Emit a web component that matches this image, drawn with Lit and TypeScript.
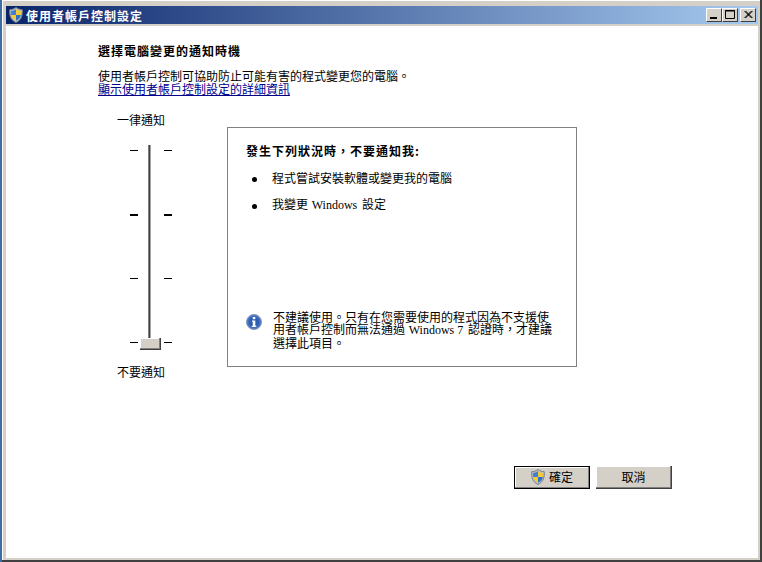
import { LitElement, html, css, svg } from "lit";
import { customElement } from "lit/decorators.js";

const shield = (cls: string) => html`<svg class=${cls} viewBox="0 0 14 16" aria-hidden="true">
  ${svg`<path d="M7 .5C5 2 3 2.6.7 2.7c-.2 5.500.6 10 6.300 12.800C12.700 12.700 13.500 8.200 13.300 2.700 11 2.600 9 2 7 .5Z" fill="#b9bdc6" stroke="#77808f" stroke-width="1"/>
  <path d="M7 2.300V8H2.200c-.1-1.300-.1-2.500-.1-4C3.900 3.800 5.500 3.300 7 2.300Z" fill="#3d7fd1"/>
  <path d="M7 2.300c1.500 1 3.100 1.500 4.900 1.700 0 1.500 0 2.700-.1 4H7V2.300Z" fill="#f7cb35"/>
  <path d="M2.200 8H7v5.800C4 12.200 2.600 10.400 2.200 8Z" fill="#f7cb35"/>
  <path d="M7 8h4.800c-.4 2.400-1.800 4.200-4.800 5.800V8Z" fill="#2f6fc4"/>`}
</svg>`;

@customElement("app-root")
export class AppRoot extends LitElement {
  static styles = css`
    :host {
      display: block;
      width: 762px;
      height: 562px;
      font-family: "Noto Sans CJK TC", "Liberation Sans", sans-serif;
      font-size: 12px;
      line-height: 13px;
      color: #000;
    }
    * { box-sizing: border-box; }
    .desk {
      height: 562px;
      padding-left: 2px;
      background: #3a6ea5;
      display: flex;
    }
    .frame {
      flex: 1;
      display: flex;
      flex-direction: column;
      background: #d4d0c8;
      padding: 6px 2px 2px 4px;
      border-right: 2px solid #404040;
      border-bottom: 2px solid #404040;
      box-shadow: inset 1px 1px 0 #fff;
    }
    .title {
      height: 18px;
      flex: none;
      display: flex;
      align-items: center;
      padding: 0 2px 0 3px;
      background: linear-gradient(90deg, #0a246a, #a6caf0);
      color: #fff;
      font-weight: 700;
      letter-spacing: 1px;
    }
    .ttl-shield { width: 14px; height: 16px; flex: none; margin-right: 3px; }
    .ctl { margin-left: auto; display: flex; align-items: center; }
    .ctl-btn {
      width: 16px;
      height: 14px;
      background: #d4d0c8;
      border-top: 1px solid #fff;
      border-left: 1px solid #fff;
      border-right: 1px solid #404040;
      border-bottom: 1px solid #404040;
      display: block;
    }
    .ctl-btn svg { display: block; width: 14px; height: 12px; }
    .ctl-btn.close { margin-left: 2px; }
    .body {
      flex: 1;
      margin-top: 2px;
      background: #fff;
      padding: 18px 86px 0 92px;
      display: flex;
      flex-direction: column;
    }
    h1 {
      margin: 0;
      font-size: 12px;
      line-height: 13px;
      font-weight: 700;
      letter-spacing: 1px;
    }
    .intro { margin: 12px 0 0; }
    .intro a { display: block; color: #00008b; text-decoration: underline; }
    .row { display: flex; margin-top: 18px; }
    .left { width: 129px; flex: none; }
    .lab { padding-left: 19px; }
    .slider {
      position: relative;
      display: flex;
      height: 205px;
      margin: 19px 0 15px 32px;
    }
    .ticks {
      width: 8px;
      display: flex;
      flex-direction: column;
      justify-content: space-between;
      padding: 5px 0 7px;
    }
    .tick { height: 1px; background: #000; }
    .tick.major { height: 2px; }
    .track {
      width: 3px;
      height: 195px;
      margin: 0 13px 0 10px;
      background: linear-gradient(90deg, #808080 0 1px, #404040 1px 2px, #a8a6a0 2px);
    }
    .thumb {
      position: absolute;
      left: 10px;
      top: 193px;
      width: 21px;
      height: 12px;
      background: #d4d0c8;
      border-right: 1px solid #404040;
      border-bottom: 1px solid #404040;
      box-shadow: inset -1px -1px 0 #808080, inset 1px 1px 0 #fff;
    }
    .box {
      width: 350px;
      height: 240px;
      margin-top: 14px;
      border: 1px solid #808080;
      padding: 16px 18px 17px 18px;
      display: flex;
      flex-direction: column;
    }
    .head { font-weight: 700; letter-spacing: 1px; }
    ul { list-style: none; margin: 14px 0 0; padding: 0; display: flex; flex-direction: column; gap: 13px; }
    li { display: flex; align-items: center; }
    .dot {
      width: 5px;
      height: 5px;
      margin: 4px 15px 0 6px;
      border-radius: 50%;
      background: #000;
      flex: none;
    }
    .latin { font-family: "Liberation Serif", serif; padding: 0 2px 0 1px; }
    .note { margin-top: auto; display: flex; gap: 11px; align-items: flex-start; line-height: 12.5px; }
    .info { width: 16px; height: 16px; flex: none; margin-top: 3px; }
    .foot { margin-top: 88px; display: flex; justify-content: flex-end; gap: 6px; }
    .btn {
      width: 76px;
      height: 23px;
      padding-bottom: 2px;
      display: flex;
      align-items: center;
      justify-content: center;
      background: #d4d0c8;
      border-right: 1px solid #404040;
      border-bottom: 1px solid #404040;
      box-shadow: inset -1px -1px 0 #808080, inset 1px 1px 0 #fff;
    }
    .btn.def {
      border: 1px solid #000;
      box-shadow: inset -1px -1px 0 #808080, inset 1px 1px 0 #fff;
      gap: 4px;
    }
    .btn-shield { width: 14px; height: 16px; }
  `;

  render() {
    return html`<div class="desk" lang="zh-TW">
      <div class="frame">
        <div class="title">
          ${shield("ttl-shield")}
          <span>使用者帳戶控制設定</span>
          <div class="ctl">
            <span class="ctl-btn"><svg viewBox="0 0 14 12">${svg`<rect x="3" y="8" width="7" height="2" fill="#000"/>`}</svg></span>
            <span class="ctl-btn"><svg viewBox="0 0 14 12">${svg`<path d="M2.500 1.500h9v8h-9z M2 2h10" fill="none" stroke="#000"/>`}</svg></span>
            <span class="ctl-btn close"><svg viewBox="0 0 14 12">${svg`<path d="M3.500 2 10.500 9M4.500 2 11.500 9M10.500 2 3.500 9M11.500 2 4.500 9" stroke="#000" stroke-width="1"/>`}</svg></span>
          </div>
        </div>
        <div class="body">
          <h1>選擇電腦變更的通知時機</h1>
          <p class="intro">使用者帳戶控制可協助防止可能有害的程式變更您的電腦。<a href="#">顯示使用者帳戶控制設定的詳細資訊</a></p>
          <div class="row">
            <div class="left">
              <div class="lab">一律通知</div>
              <div class="slider">
                <div class="ticks"><div class="tick"></div><div class="tick major"></div><div class="tick"></div><div class="tick"></div></div>
                <div class="track"></div>
                <div class="ticks"><div class="tick"></div><div class="tick major"></div><div class="tick"></div><div class="tick"></div></div>
                <div class="thumb"></div>
              </div>
              <div class="lab">不要通知</div>
            </div>
            <div class="box">
              <div class="head">發生下列狀況時，不要通知我:</div>
              <ul>
                <li><span class="dot"></span>程式嘗試安裝軟體或變更我的電腦</li>
                <li><span class="dot"></span><span>我變更 <span class="latin">Windows</span> 設定</span></li>
              </ul>
              <div class="note">
                <svg class="info" viewBox="0 0 16 16" aria-hidden="true">${svg`
                  <circle cx="8" cy="8" r="7.500" fill="#4a76c4" stroke="#8b9ab8"/>
                  <circle cx="8" cy="8" r="5.500" fill="#2f5fb5"/>
                  <rect x="6.800" y="3" width="2.500" height="2.200" fill="#fff"/>
                  <path d="M6 6.500h3.300v5.300h1V13H5.800v-1.200h1V7.700H6Z" fill="#fff"/>`}</svg>
                <div>不建議使用。只有在您需要使用的程式因為不支援使<br>用者帳戶控制而無法通過 <span class="latin">Windows 7</span> 認證時，才建議<br>選擇此項目。</div>
              </div>
            </div>
          </div>
          <div class="foot">
            <div class="btn def">${shield("btn-shield")}<span>確定</span></div>
            <div class="btn">取消</div>
          </div>
        </div>
      </div>
    </div>`;
  }
}
